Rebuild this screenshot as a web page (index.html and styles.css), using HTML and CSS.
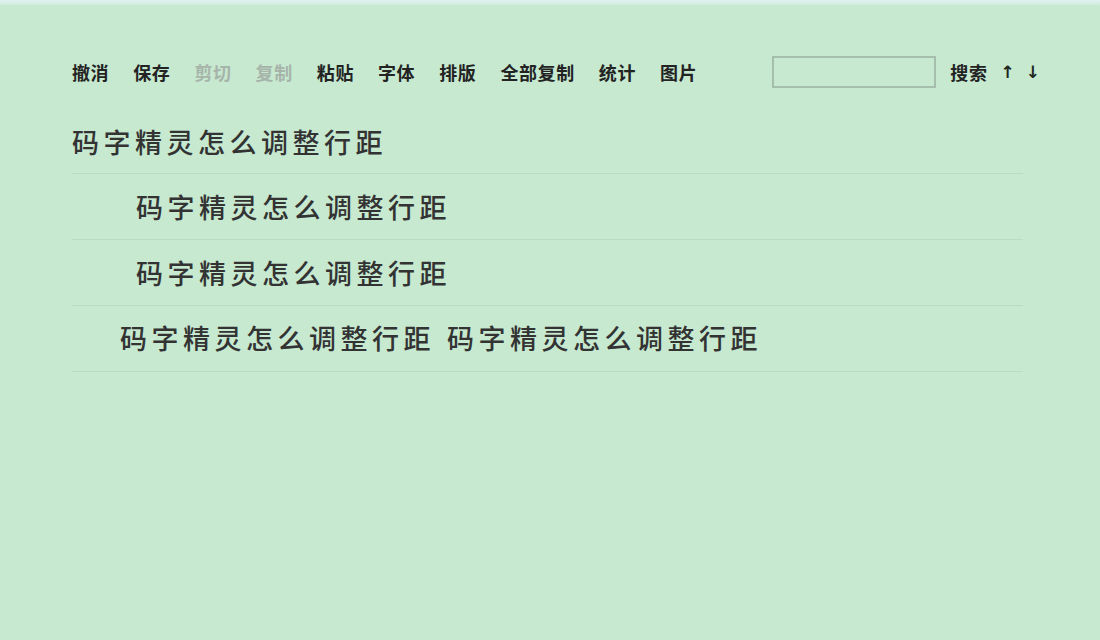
FILE: index.html
```html
<!DOCTYPE html>
<html lang="zh-CN">
<head>
    <meta charset="UTF-8">
    <meta name="viewport" content="width=device-width, initial-scale=1.0">
    <title>码字精灵</title>
    <link rel="stylesheet" href="styles.css">
</head>
<body>
    <div class="top-strip"></div>
    <div class="editor">
        <!-- Toolbar -->
        <div class="toolbar">
            <span class="tool">撤消</span>
            <span class="tool">保存</span>
            <span class="tool disabled">剪切</span>
            <span class="tool disabled">复制</span>
            <span class="tool">粘贴</span>
            <span class="tool">字体</span>
            <span class="tool">排版</span>
            <span class="tool">全部复制</span>
            <span class="tool">统计</span>
            <span class="tool">图片</span>

            <div class="search">
                <input type="text" class="search-input">
                <span class="tool">搜索</span>
                <span class="arrow">↑</span>
                <span class="arrow">↓</span>
            </div>
        </div>

        <!-- Text lines -->
        <div class="lines">
            <div class="line">码字精灵怎么调整行距</div>
            <div class="line indent-2">码字精灵怎么调整行距</div>
            <div class="line indent-2">码字精灵怎么调整行距</div>
            <div class="line indent-1">码字精灵怎么调整行距<span class="gap"></span>码字精灵怎么调整行距</div>
        </div>
    </div>
</body>
</html>
```

FILE: styles.css
```css
* {
    margin: 0;
    padding: 0;
    box-sizing: border-box;
}

body {
    background-color: #c6e9d0;
    font-family: "Noto Sans CJK SC", "Noto Sans", sans-serif;
    color: #2e2e2e;
    min-height: 100vh;
}

.top-strip {
    height: 5px;
    background: linear-gradient(#dff0f0, #d2ecdf);
}

.editor {
    width: 968px;
    margin-left: 72px;
    padding-top: 49px;
}

.toolbar {
    display: flex;
    align-items: center;
    gap: 24px;
    height: 36px;
}

.tool {
    font-size: 18px;
    font-weight: bold;
    letter-spacing: 0.6px;
    color: #232323;
    line-height: 1;
}

.tool.disabled {
    color: #a7b4aa;
}

.search {
    margin-left: auto;
    display: flex;
    align-items: center;
}

.search-input {
    width: 164px;
    height: 32px;
    border: 2px solid #a6bfad;
    background-color: transparent;
    margin-right: 14px;
    outline: none;
}

.arrow {
    font-family: "DejaVu Sans", sans-serif;
    font-weight: bold;
    font-size: 17px;
    color: #1f2a22;
    margin-left: 13px;
    line-height: 1;
}

.arrow:last-child {
    margin-left: 11px;
}

.lines {
    width: 951px;
    margin-top: 20px;
}

.line {
    height: 66px;
    padding-top: 15px;
    font-size: 27px;
    font-weight: 500;
    letter-spacing: 4.5px;
    line-height: 36px;
    color: #333;
    border-bottom: 1px solid #b9dcc3;
    white-space: nowrap;
}

.line:first-child {
    height: 64px;
    padding-top: 14px;
}

.line:last-child {
    padding-top: 14px;
}

.indent-1 {
    padding-left: 48px;
}

.indent-2 {
    padding-left: 64px;
}

.gap {
    display: inline-block;
    width: 12px;
}
```
